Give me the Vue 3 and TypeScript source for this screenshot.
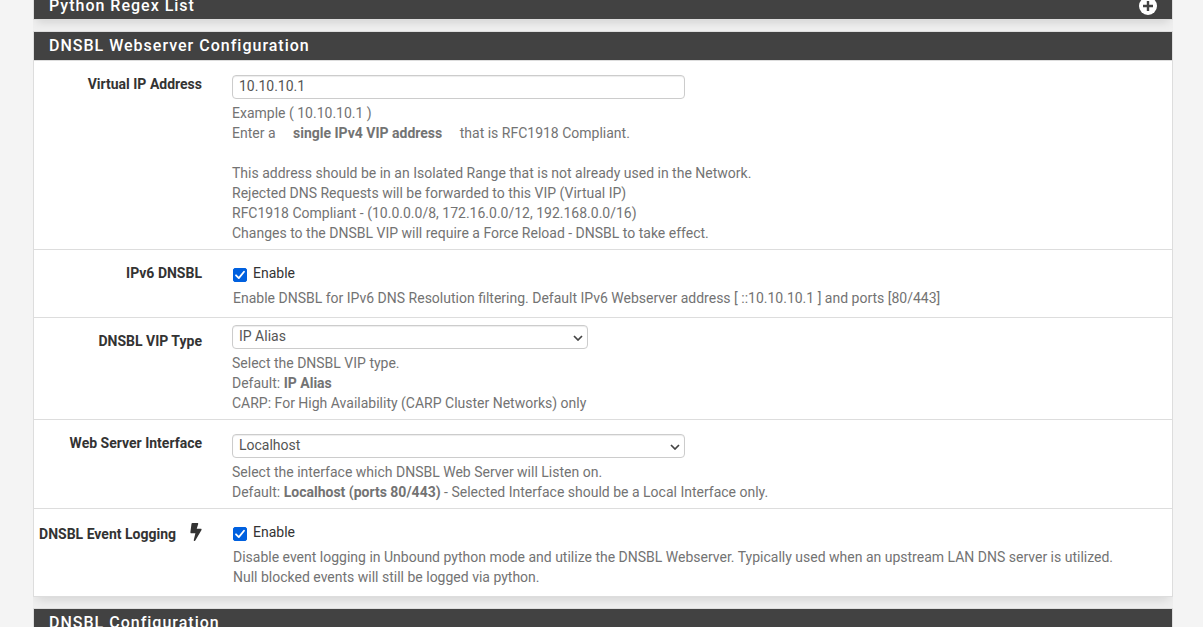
<script setup lang="ts">
import { ref } from 'vue'

const vipAddress = ref('10.10.10.1')
const ipv6Enabled = ref(true)
const vipType = ref('IP Alias')
const webInterface = ref('Localhost')
const eventLogging = ref(true)
</script>

<template>
  <main class="page">
    <form class="container" @submit.prevent>
      <section class="panel">
        <header class="heading">
          <h2>Python Regex List</h2>
          <button class="toggle" type="button" aria-label="Expand Python Regex List">
            <svg viewBox="0 0 18 18" width="18" height="18" aria-hidden="true">
              <circle cx="9" cy="9" r="9" fill="#fff" />
              <path d="M9 4v10M4 9h10" stroke="#424242" stroke-width="2.4" />
            </svg>
          </button>
        </header>
      </section>

      <section class="panel">
        <header class="heading ruled">
          <h2>DNSBL Webserver Configuration</h2>
        </header>

        <div class="row">
          <label class="name" for="vip">Virtual IP Address</label>
          <div class="field">
            <input id="vip" v-model="vipAddress" class="control five" type="text" />
            <p class="help">
              Example ( 10.10.10.1 )<br />
              Enter a <strong class="spaced">single IPv4 VIP address</strong> that is RFC1918 Compliant.<br />
              <br />
              This address should be in an Isolated Range that is not already used in the Network.<br />
              Rejected DNS Requests will be forwarded to this VIP (Virtual IP)<br />
              RFC1918 Compliant - (10.0.0.0/8, 172.16.0.0/12, 192.168.0.0/16)<br />
              Changes to the DNSBL VIP will require a Force Reload - DNSBL to take effect.
            </p>
          </div>
        </div>

        <div class="row">
          <span class="name">IPv6 DNSBL</span>
          <div class="field checkfield">
            <label class="check">
              <input v-model="ipv6Enabled" type="checkbox" />
              <span>Enable</span>
            </label>
            <p class="help">
              Enable DNSBL for IPv6 DNS Resolution filtering. Default IPv6 Webserver address [ ::10.10.10.1 ] and ports [80/443]
            </p>
          </div>
        </div>

        <div class="row">
          <label class="name" for="vip-type">DNSBL VIP Type</label>
          <div class="field tight">
            <div class="select four">
              <select id="vip-type" v-model="vipType" class="control">
                <option>IP Alias</option>
                <option>CARP</option>
              </select>
              <svg class="arrow" viewBox="0 0 10 6" width="10" height="6" aria-hidden="true">
                <path d="M1 1l4 4 4-4" fill="none" stroke="#444" stroke-width="1.7" />
              </svg>
            </div>
            <p class="help">
              Select the DNSBL VIP type.<br />
              Default: <strong>IP Alias</strong><br />
              CARP: For High Availability (CARP Cluster Networks) only
            </p>
          </div>
        </div>

        <div class="row">
          <label class="name" for="web-interface">Web Server Interface</label>
          <div class="field">
            <div class="select five">
              <select id="web-interface" v-model="webInterface" class="control">
                <option>Localhost</option>
                <option>LAN</option>
              </select>
              <svg class="arrow" viewBox="0 0 10 6" width="10" height="6" aria-hidden="true">
                <path d="M1 1l4 4 4-4" fill="none" stroke="#444" stroke-width="1.7" />
              </svg>
            </div>
            <p class="help">
              Select the interface which DNSBL Web Server will Listen on.<br />
              Default: <strong>Localhost (ports 80/443)</strong> - Selected Interface should be a Local Interface only.
            </p>
          </div>
        </div>

        <div class="row">
          <span class="name with-icon">
            DNSBL Event Logging
            <svg class="bolt" viewBox="0 0 320 512" width="12" height="18" aria-hidden="true">
              <path d="M296 160H180.6l42.6-129.8C227.2 15 215.7 0 200 0H56C44 0 33.8 8.9 32.2 20.8l-32 240C-1.7 275.2 9.5 288 24 288h118.7L96.6 482.5c-3.6 15.2 8 29.5 23.3 29.5 8.4 0 16.4-4.4 20.8-12l176-304c9.3-15.9-2.2-36-20.7-36z" fill="#333" />
            </svg>
          </span>
          <div class="field checkfield">
            <label class="check">
              <input v-model="eventLogging" type="checkbox" />
              <span>Enable</span>
            </label>
            <p class="help">
              Disable event logging in Unbound python mode and utilize the DNSBL Webserver. Typically used when an upstream LAN DNS server is utilized.<br />
              Null blocked events will still be logged via python.
            </p>
          </div>
        </div>
      </section>

      <section class="panel">
        <header class="heading">
          <h2>DNSBL Configuration</h2>
        </header>
      </section>
    </form>
  </main>
</template>

<style>
body {
  margin: 0;
  background: #f4f4f4;
}
</style>

<style scoped>
* {
  box-sizing: border-box;
}

.page {
  height: 100vh;
  padding-left: 3px;
  overflow: hidden;
  font: 14px/20px Roboto, "Open Sans", sans-serif;
  color: #333;
}

.container {
  display: flex;
  flex-direction: column;
  gap: 11px;
  max-width: 1140px;
  margin: -9px auto 0;
  background: #efefef;
}

.panel {
  border: 1px solid #ddd;
  background: #fff;
  box-shadow: 0 6px 10px -4px rgba(0, 0, 0, 0.13);
  clip-path: inset(0 0 -11px 0);
}

.heading {
  display: flex;
  align-items: center;
  justify-content: space-between;
  height: 27px;
  padding: 0 15px;
  background: #424242;
  color: #fff;
}

.ruled {
  height: 29px;
  border-bottom: 1px solid #ddd;
}

h2 {
  margin: 0;
  font-size: 16px;
  line-height: 20px;
  font-weight: 500;
  letter-spacing: 1px;
}

.toggle {
  display: flex;
  padding: 0;
  border: 0;
  background: none;
}

.row {
  display: grid;
  grid-template-columns: repeat(12, 1fr);
  margin: 0 -10px;
  border-bottom: 1px solid #ddd;
}

.row:last-child {
  border-bottom: 0;
}

.name {
  grid-column: span 2;
  padding: 13px 15px 0;
  text-align: right;
  font-weight: 700;
  white-space: nowrap;
}

.with-icon {
  display: flex;
  justify-content: flex-end;
  align-items: flex-start;
  gap: 14px;
  padding-top: 15px;
  padding-left: 0;
}

.bolt {
  flex: none;
  margin-top: -1px;
}

.field {
  grid-column: span 10;
  padding: 14px 15px 6px;
}

.tight {
  padding-top: 7px;
}

.five {
  width: calc((100% + 30px) / 2 - 30px);
}

.four {
  width: calc((100% + 30px) * 2 / 5 - 30px);
}

.select {
  position: relative;
}

.control {
  display: block;
  height: 24px;
  padding: 0 6px 2px;
  border: 1px solid #ccc;
  border-radius: 4px;
  background: #fff;
  box-shadow: inset 0 1px 1px rgba(0, 0, 0, 0.075);
  color: #555;
  font: inherit;
  outline: 0;
}

.select .control {
  width: 100%;
  appearance: none;
}

.arrow {
  position: absolute;
  right: 5px;
  top: 10px;
  pointer-events: none;
}

.help {
  margin: 4px 0 0;
  color: #737373;
}

.spaced {
  margin: 0 14px;
}

.checkfield {
  padding: 13px 16px 9px;
}

.check {
  display: flex;
  align-items: center;
  gap: 6px;
  width: max-content;
}

.check input {
  appearance: none;
  width: 14px;
  height: 14px;
  margin: 3px 0 0;
  border: 1px solid #0060df;
  border-radius: 2px;
  background: #fff;
}

.check input:checked {
  background: #0060df url("data:image/svg+xml,%3Csvg xmlns='http://www.w3.org/2000/svg' viewBox='0 0 12 12'%3E%3Cpath d='M2 6.3l2.8 2.8L10 2.8' fill='none' stroke='white' stroke-width='1.8' stroke-linecap='round' stroke-linejoin='round'/%3E%3C/svg%3E") center / 12px no-repeat;
}

.checkfield .help {
  margin-top: 5px;
}
</style>
